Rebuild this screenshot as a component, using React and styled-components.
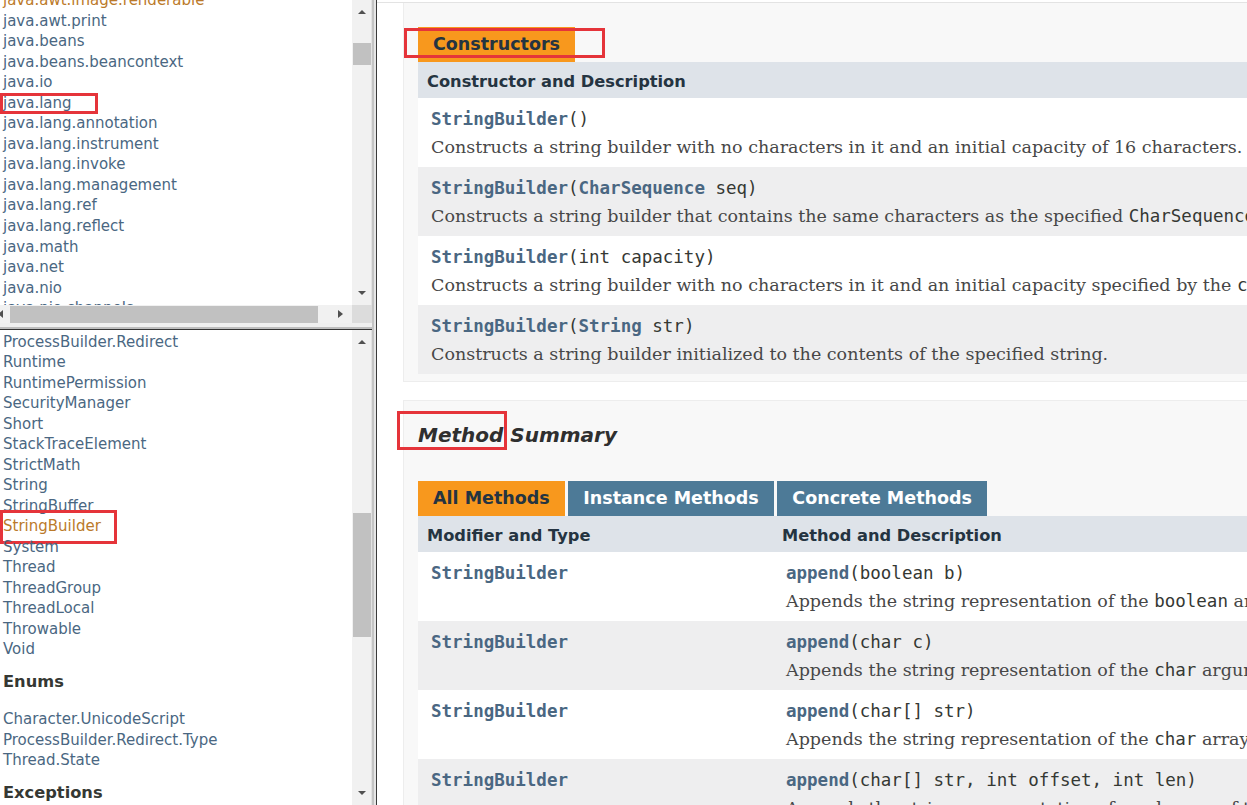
import React from 'react';
import styled, { createGlobalStyle } from 'styled-components';

const colors = {
  link: '#4A6782',
  visited: '#bb7a2a',
  text: '#353833',
  block: '#474747',
  heading: '#253441',
  orange: '#F8981D',
  tab: '#4D7A97',
  header: '#dee3e9',
  alt: '#eeeeef',
  blockBg: '#f8f8f8',
  red: '#e5343a',
};

const GlobalStyle = createGlobalStyle`
  html, body { margin: 0; padding: 0; overflow: hidden; background: #fff; }
  body { font-family: 'DejaVu Sans', Arial, sans-serif; color: ${colors.text}; }
  ul { margin: 0; padding: 0; list-style: none; }
`;

const Page = styled.div`
  display: flex;
  width: 1247px;
  height: 805px;
  overflow: hidden;
`;

/* ---------- left frames ---------- */

const Sidebar = styled.div`
  width: 372px;
  flex: none;
  display: flex;
  flex-direction: column;
`;

const Frame = styled.div`
  display: grid;
  grid-template-columns: 352px 20px;
  grid-template-rows: ${p => (p.$hscroll ? '305px 18px' : '1fr')};
  height: ${p => p.$height};
  flex: ${p => (p.$grow ? 1 : 'none')};
  min-height: 0;
`;

const Viewport = styled.div`
  overflow: hidden;
  position: relative;
`;

const NavList = styled.ul`
  padding-left: 3px;
  margin-top: ${p => p.$offset || 0}px;
`;

const NavItem = styled.li`
  position: relative;
  font-size: 15px;
  line-height: ${p => p.$lh || 20.5}px;
  white-space: nowrap;
  a {
    color: ${p => (p.$visited ? colors.visited : colors.link)};
    text-decoration: none;
  }
`;

const GroupTitle = styled.h2`
  margin: 12px 0 17.5px 3px;
  font-size: 16.25px;
  line-height: 20px;
  font-weight: bold;
  color: ${colors.text};
`;

const VScroll = styled.div`
  background: #f1f1f1;
  border-right: 1px solid #e2e2e2;
  display: flex;
  flex-direction: column;
  align-items: center;
`;

const ArrowBox = styled.div`
  flex: none;
  width: ${p => (p.$h ? '24px' : '100%')};
  height: ${p => (p.$h ? '100%' : '24px')};
  display: flex;
  align-items: center;
  justify-content: center;
  &::before {
    content: '';
    width: 0;
    height: 0;
    ${p => p.$dir === 'up' && `border-left:4px solid transparent;border-right:4px solid transparent;border-bottom:4px solid #505050;`}
    ${p => p.$dir === 'down' && `border-left:4px solid transparent;border-right:4px solid transparent;border-top:4px solid #505050;`}
    ${p => p.$dir === 'right' && `border-top:4px solid transparent;border-bottom:4px solid transparent;border-left:5px solid #505050;`}
    ${p => p.$dir === 'left' && `border-top:4px solid transparent;border-bottom:4px solid transparent;border-right:5px solid #505050;margin-left:-9px;`}
  }
`;

const Track = styled.div`
  flex: 1;
  width: 100%;
  display: flex;
  flex-direction: ${p => (p.$h ? 'row' : 'column')};
  align-items: center;
`;

const Thumb = styled.div`
  flex: none;
  background: #c1c1c1;
  ${p =>
    p.$h
      ? `height: 17px; width: ${p.$size}px; margin-left: ${p.$start}px;`
      : `width: 18px; height: ${p.$size}px; margin-top: ${p.$start}px;`}
`;

const HScroll = styled.div`
  grid-column: 1;
  background: #f1f1f1;
  display: flex;
  align-items: center;
`;

const Corner = styled.div`
  background: #dcdcdc;
`;

const HDivider = styled.div`
  flex: none;
  border-top: 4px solid #efefef;
  height: 2px;
  background: #bdbdbd;
  border-bottom: 1px solid #333;
`;

const VDivider = styled.div`
  flex: none;
  width: 2px;
  background: #e6e6e6;
  border-left: 2px solid #c4c4c4;
  border-right: 1px solid #3a3a3a;
`;

/* red annotation boxes */
const Mark = styled.span`
  position: absolute;
  left: ${p => p.$x}px;
  top: ${p => p.$y}px;
  width: ${p => p.$w}px;
  height: ${p => p.$h}px;
  border: 3px solid ${colors.red};
  box-sizing: border-box;
  pointer-events: none;
`;

/* ---------- main content ---------- */

const Main = styled.main`
  flex: 1;
  min-width: 0;
  overflow: hidden;
  padding-top: 2px;
`;

const TopRule = styled.div`
  height: 1px;
  background: #e3e3e3;
`;

const Block = styled.section`
  margin: ${p => (p.$first ? 0 : 18)}px 0 0 26px;
  width: 1300px;
  background: ${colors.blockBg};
  border: 1px solid #ededed;
  border-top-width: ${p => (p.$first ? 0 : 1)}px;
  padding: ${p => (p.$first ? 24 : 22)}px 0 7px 14px;
`;

const SectionTitle = styled.h3`
  margin: 0 0 34px;
  font-size: 20px;
  line-height: 24px;
  font-weight: bold;
  font-style: italic;
  color: #2f2f2f;
`;

const Anchor = styled.span`
  position: relative;
`;

const Tabs = styled.div`
  display: flex;
  gap: 3.6px;
`;

const Tab = styled.span`
  position: relative;
  height: 35px;
  line-height: 35px;
  padding: 0 15px;
  font-size: 17.5px;
  font-weight: bold;
  white-space: nowrap;
  background: ${p => (p.$active ? colors.orange : colors.tab)};
  color: ${p => (p.$active ? colors.heading : '#fff')};
`;

const Table = styled.table`
  border-collapse: collapse;
  border-spacing: 0;
  width: 1280px;
  table-layout: fixed;
`;

const Th = styled.th`
  height: 36px;
  padding: 2px 9px 0;
  box-sizing: border-box;
  background: ${colors.header};
  color: ${colors.heading};
  font-size: 16.25px;
  font-weight: bold;
  text-align: left;
  white-space: nowrap;
  width: ${p => (p.$w ? `${p.$w}px` : 'auto')};
`;

const Row = styled.tr`
  background: ${p => (p.$alt ? colors.alt : '#fff')};
`;

const Td = styled.td`
  padding: 9px 3px 4.75px 13px;
  vertical-align: top;
  overflow: hidden;
`;

const Sig = styled.code`
  display: block;
  font-family: 'DejaVu Sans Mono', 'Liberation Mono', monospace;
  font-size: 17.5px;
  line-height: 24.5px;
  color: ${colors.text};
  white-space: nowrap;
`;

const Ref = styled.a`
  font-weight: bold;
  color: ${colors.link};
  text-decoration: none;
`;

const Desc = styled.div`
  margin: 3.75px 0 2.5px;
  font-family: 'DejaVu Serif', Georgia, serif;
  font-size: 17.5px;
  line-height: 24.5px;
  color: ${colors.block};
  white-space: nowrap;
`;

const Mono = styled.code`
  font-family: 'DejaVu Sans Mono', 'Liberation Mono', monospace;
  font-size: 17.5px;
  color: ${colors.text};
`;

const packages = [
  'java.awt.image.renderable', 'java.awt.print', 'java.beans', 'java.beans.beancontext',
  'java.io', 'java.lang', 'java.lang.annotation', 'java.lang.instrument', 'java.lang.invoke',
  'java.lang.management', 'java.lang.ref', 'java.lang.reflect', 'java.math', 'java.net',
  'java.nio', 'java.nio.channels',
];

const classes = [
  'ProcessBuilder.Redirect', 'Runtime', 'RuntimePermission', 'SecurityManager', 'Short',
  'StackTraceElement', 'StrictMath', 'String', 'StringBuffer', 'StringBuilder', 'System',
  'Thread', 'ThreadGroup', 'ThreadLocal', 'Throwable', 'Void',
];

const enums = ['Character.UnicodeScript', 'ProcessBuilder.Redirect.Type', 'Thread.State'];
const exceptions = ['ArithmeticException', 'ArrayIndexOutOfBoundsException'];

const constructors = [
  { sig: <><Ref>StringBuilder</Ref>()</>, desc: 'Constructs a string builder with no characters in it and an initial capacity of 16 characters.' },
  { sig: <><Ref>StringBuilder</Ref>(<Ref>CharSequence</Ref>&nbsp;seq)</>, desc: <>Constructs a string builder that contains the same characters as the specified <Mono>CharSequence</Mono>.</> },
  { sig: <><Ref>StringBuilder</Ref>(int&nbsp;capacity)</>, desc: <>Constructs a string builder with no characters in it and an initial capacity specified by the <Mono>capacity</Mono> argument.</> },
  { sig: <><Ref>StringBuilder</Ref>(<Ref>String</Ref>&nbsp;str)</>, desc: 'Constructs a string builder initialized to the contents of the specified string.' },
];

const methods = [
  { sig: <><Ref>append</Ref>(boolean&nbsp;b)</>, desc: <>Appends the string representation of the <Mono>boolean</Mono> argument to the sequence.</> },
  { sig: <><Ref>append</Ref>(char&nbsp;c)</>, desc: <>Appends the string representation of the <Mono>char</Mono> argument to this sequence.</> },
  { sig: <><Ref>append</Ref>(char[]&nbsp;str)</>, desc: <>Appends the string representation of the <Mono>char</Mono> array argument to this sequence.</> },
  { sig: <><Ref>append</Ref>(char[]&nbsp;str, int&nbsp;offset, int&nbsp;len)</>, desc: <>Appends the string representation of a subarray of the <Mono>char</Mono> array argument to this sequence.</> },
];

const ScrollV = ({ start, size }) => (
  <VScroll>
    <ArrowBox $dir="up" />
    <Track>
      <Thumb $start={start} $size={size} />
    </Track>
    <ArrowBox $dir="down" />
  </VScroll>
);

export default function App() {
  return (
    <Page>
      <GlobalStyle />
      <Sidebar>
        <Frame $hscroll $height="323px">
          <Viewport>
            <NavList $offset={-10}>
              {packages.map((p, i) => (
                <NavItem key={p} $lh={20.55} $visited={i === 0}>
                  <a href="#">{p}</a>
                  {p === 'java.lang' && <Mark $x={-3} $y={0} $w={98} $h={21} />}
                </NavItem>
              ))}
            </NavList>
          </Viewport>
          <ScrollV start={19} size={22} />
          <HScroll>
            <ArrowBox $h $dir="left" style={{ width: 10 }} />
            <Thumb $h $start={0} $size={308} />
            <Track $h />
            <ArrowBox $h $dir="right" />
          </HScroll>
          <Corner />
        </Frame>
        <HDivider />
        <Frame $grow>
          <Viewport>
            <NavList $offset={1.5}>
              {classes.map(c => (
                <NavItem key={c} $visited={c === 'StringBuilder'}>
                  <a href="#">{c}</a>
                  {c === 'StringBuilder' && <Mark $x={-3} $y={-6} $w={117} $h={34} />}
                </NavItem>
              ))}
            </NavList>
            <GroupTitle>Enums</GroupTitle>
            <NavList>
              {enums.map(c => (
                <NavItem key={c}><a href="#">{c}</a></NavItem>
              ))}
            </NavList>
            <GroupTitle>Exceptions</GroupTitle>
            <NavList>
              {exceptions.map(c => (
                <NavItem key={c}><a href="#">{c}</a></NavItem>
              ))}
            </NavList>
          </Viewport>
          <ScrollV start={159} size={124} />
        </Frame>
      </Sidebar>
      <VDivider />
      <Main>
        <TopRule />
        <Block $first>
          <Tabs>
            <Tab $active>
              Constructors
              <Mark $x={-14} $y={1} $w={201} $h={30} />
            </Tab>
          </Tabs>
          <Table>
            <thead>
              <tr><Th>Constructor and Description</Th></tr>
            </thead>
            <tbody>
              {constructors.map((c, i) => (
                <Row key={i} $alt={i % 2 === 1}>
                  <Td>
                    <Sig>{c.sig}</Sig>
                    <Desc>{c.desc}</Desc>
                  </Td>
                </Row>
              ))}
            </tbody>
          </Table>
        </Block>
        <Block>
          <SectionTitle>
            <Anchor>
              Method
              <Mark $x={-21} $y={-12} $w={110} $h={39} />
            </Anchor>{' '}
            Summary
          </SectionTitle>
          <Tabs>
            <Tab $active>All Methods</Tab>
            <Tab>Instance Methods</Tab>
            <Tab>Concrete Methods</Tab>
          </Tabs>
          <Table>
            <thead>
              <tr>
                <Th $w={355}>Modifier and Type</Th>
                <Th>Method and Description</Th>
              </tr>
            </thead>
            <tbody>
              {methods.map((m, i) => (
                <Row key={i} $alt={i % 2 === 1}>
                  <Td>
                    <Sig><Ref>StringBuilder</Ref></Sig>
                  </Td>
                  <Td>
                    <Sig>{m.sig}</Sig>
                    <Desc>{m.desc}</Desc>
                  </Td>
                </Row>
              ))}
            </tbody>
          </Table>
        </Block>
      </Main>
    </Page>
  );
}
